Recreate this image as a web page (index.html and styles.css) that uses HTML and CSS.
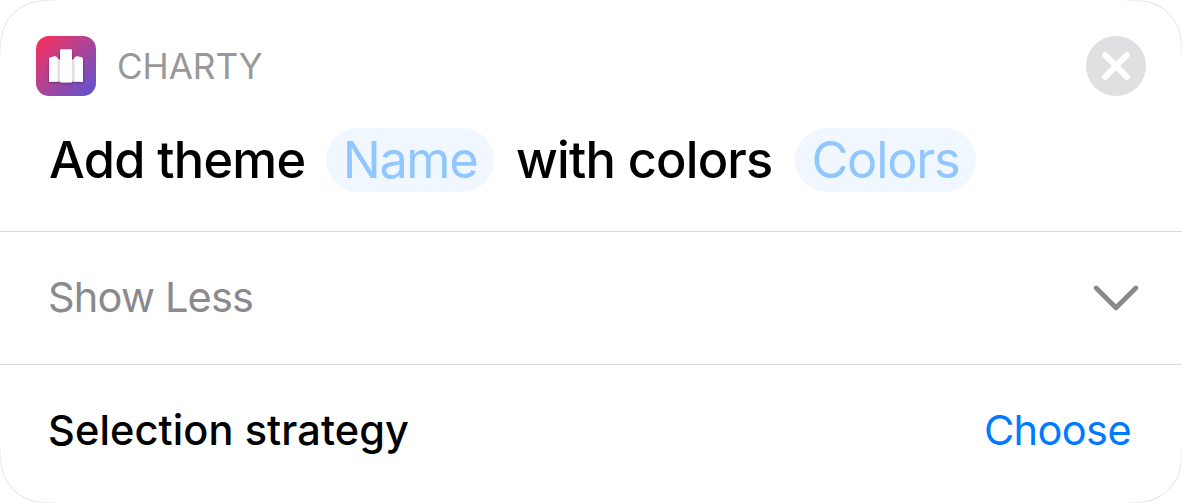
FILE: index.html
```html
<!DOCTYPE html>
<html lang="en">
<head>
<meta charset="utf-8">
<title>Charty</title>
<link rel="stylesheet" href="styles.css">
</head>
<body>
<main class="card">
  <section class="action">
    <header class="head">
      <svg class="app-icon" viewBox="0 0 60 60" width="60" height="60">
        <defs>
          <linearGradient id="g" x1="0" y1="0" x2="1" y2="1"><stop offset="0" stop-color="#ff2f58"/><stop offset="1" stop-color="#5856d6"/></linearGradient>
          <filter id="shade" x="-20%" y="-20%" width="140%" height="150%"><feDropShadow dx="0" dy="1" stdDeviation="1" flood-color="#301040" flood-opacity="0.5"/></filter>
        </defs>
        <rect width="60" height="60" rx="13" fill="url(#g)"/>
        <g filter="url(#shade)">
          <path d="M19 20.500l5.500 4v21l-5.500.5zM41 20.500l-5.500 4v21l5.500.5z" fill="#e2dee3"/>
          <path d="M13 23q0-1 1-1.400l4.500-1.300q1.500-.2 2.500 1l.5.500v23.700l-7.500.5q-1 0-1-1z" fill="#fff"/>
          <path d="M47 23q0-1-1-1.400l-4.500-1.300q-1.500-.2-2.500 1l-.5.500v23.700l7.500.5q1 0 1-1z" fill="#fff"/>
          <rect x="24" y="13.300" width="12" height="33.200" rx="1.200" fill="#fff"/>
        </g>
      </svg>
      <span class="app-name">CHARTY</span>
      <svg class="close" viewBox="0 0 60 60" width="60" height="60"><circle cx="30" cy="30" r="30" fill="#e0e0e2"/><path d="M19.200 19L40.800 40.800M40.800 19L19.200 40.800" stroke="#fff" stroke-width="6" stroke-linecap="round"/></svg>
    </header>
    <div class="summary"><span class="add">Add theme</span><span class="pill name"><span>Name</span></span><span class="with">with colors</span><span class="pill colors"><span>Colors</span></span></div>
  </section>
  <section class="row less"><span class="show">Show Less</span>
    <svg class="chevron" viewBox="0 0 46 28" width="46" height="28"><path d="M3.200 4L23 23.800L42.800 4" fill="none" stroke="#8a8a8e" stroke-width="4.900" stroke-linecap="round" stroke-linejoin="round"/></svg>
  </section>
  <section class="row strategy"><span class="label">Selection strategy</span><span class="choose">Choose</span></section>
</main>
</body>
</html>
```
FILE: styles.css
```css
body { margin: 0; background: #fff; font-family: Inter, sans-serif; }
.card { position: relative; box-sizing: border-box; width: 1182px; height: 503px; border-radius: 44px; background: #fff; overflow: hidden; }
/* hairline that fades out along the straight edges */
.card::after {
  content: ""; position: absolute; inset: 0; border: 1px solid #dcdcdc; border-radius: 44px; pointer-events: none;
  mask: radial-gradient(circle at 0 0, #000 35px, transparent 60px),
        radial-gradient(circle at 100% 0, #000 35px, transparent 60px),
        radial-gradient(circle at 0 100%, #000 35px, transparent 60px),
        radial-gradient(circle at 100% 100%, #000 35px, transparent 60px);
}
.action { box-sizing: border-box; height: 232px; padding: 36px 36px 0; border-bottom: 1px solid #d8d8da; }
.head { display: flex; align-items: center; height: 60px; }
.app-name { margin-left: 21px; font-size: 35.2px; color: #98989a; letter-spacing: -0.1px; }
.close { margin-left: auto; }
.summary { display: flex; align-items: center; height: 64px; margin: 31.5px 0 0 13px; font-size: 50.5px; font-weight: 500; white-space: nowrap; }
.add { width: 277px; letter-spacing: -0.75px; }
.pill { display: flex; justify-content: center; align-items: center; height: 64px; border-radius: 32px; background: #f0f7ff; color: #91c6ff; font-weight: 400; }
.name { width: 168px; letter-spacing: -1.4px; }
.with { width: 279px; margin-left: 22px; letter-spacing: -0.8px; }
.colors { width: 181px; letter-spacing: -1.2px; }
.row { box-sizing: border-box; display: flex; align-items: center; justify-content: space-between; padding: 0 51px 0 48px; font-size: 41.5px; white-space: nowrap; }
.less { height: 133px; padding-right: 43px; padding-bottom: 2px; border-bottom: 1px solid #d8d8da; color: #8a8a8e; }
.show { letter-spacing: -0.8px; }
.chevron { position: relative; top: 1px; }
.strategy { height: 130px; }
.label { font-weight: 500; letter-spacing: 0.1px; }
.choose { color: #007aff; letter-spacing: -0.6px; }
```
